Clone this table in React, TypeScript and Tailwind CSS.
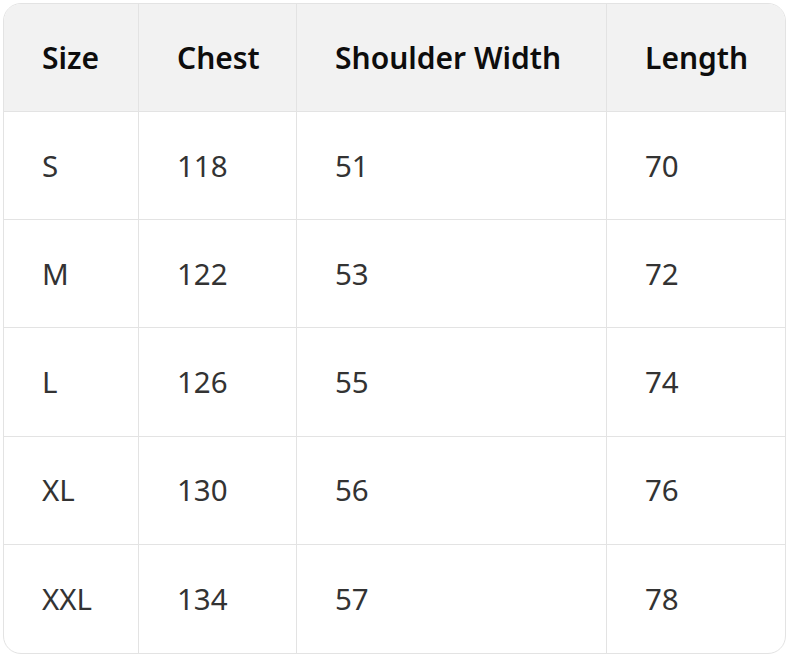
import React from 'react';

const headers = ['Size', 'Chest', 'Shoulder Width', 'Length'];

const rows: string[][] = [
  ['S', '118', '51', '70'],
  ['M', '122', '53', '72'],
  ['L', '126', '55', '74'],
  ['XL', '130', '56', '76'],
  ['XXL', '134', '57', '78'],
];

const App: React.FC = () => {
  return (
    <div className="w-[794px] h-[655px] bg-white p-[3px] pr-[8px] pb-[1px] font-['Noto_Sans',sans-serif]">
      <div className="h-full border border-[#e3e3e3] rounded-[18px] overflow-hidden grid grid-cols-[135px_158px_310px_1fr] grid-rows-6">
        {/* Header */}
        {headers.map((h, i) => (
          <div
            key={h}
            className={`flex items-center pl-[38px] bg-[#f2f2f2] border-b border-[#e3e3e3] text-[30px] font-semibold text-[#0d0d0d] ${
              i < 3 ? 'border-r' : ''
            }`}
          >
            {h}
          </div>
        ))}

        {/* Body */}
        {rows.map((row, r) =>
          row.map((cell, c) => (
            <div
              key={`${r}-${c}`}
              className={`flex items-center pl-[38px] border-[#e3e3e3] text-[29.5px] text-[#333333] ${
                c < 3 ? 'border-r' : ''
              } ${r < rows.length - 1 ? 'border-b' : ''}`}
            >
              {cell}
            </div>
          ))
        )}
      </div>
    </div>
  );
};

export default App;
